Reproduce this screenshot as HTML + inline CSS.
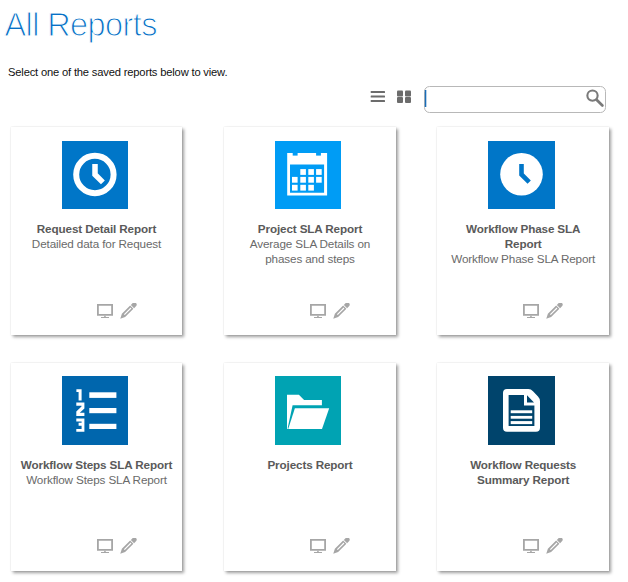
<!DOCTYPE html>
<html>
<head>
<meta charset="utf-8">
<style>
html,body{margin:0;padding:0;background:#fff;width:628px;height:582px;overflow:hidden;position:relative;font-family:"Liberation Sans",sans-serif;}
.abs{position:absolute;display:block;}
h1{position:absolute;left:4.5px;top:5.24px;margin:0;font-size:32.5px;line-height:40px;font-weight:400;color:#0870c6;white-space:nowrap;letter-spacing:-0.6px;-webkit-text-stroke:1.1px #fff;paint-order:fill stroke;}
.sub{position:absolute;left:8px;top:65.02px;font-size:11.2px;line-height:14px;color:#111;white-space:nowrap;letter-spacing:-0.18px;}
.card{position:absolute;background:#fff;box-shadow:2px 2px 3px rgba(0,0,0,0.38),0 0 1.5px rgba(0,0,0,0.12);}
.txt{position:absolute;width:200px;text-align:center;font-size:11.7px;line-height:15px;white-space:nowrap;letter-spacing:-0.13px;}
.t{font-weight:700;color:#5a5a5a;}
.d{color:#6a6a6a;}
</style>
</head>
<body>
<h1>All Reports</h1>
<div class="sub">Select one of the saved reports below to view.</div>
<svg class="abs" style="left:0;top:0" width="628" height="120">
<g fill="#6c6c6c">
<rect x="370.7" y="91" width="14.3" height="2" rx="0.5"/>
<rect x="370.7" y="95.5" width="14.3" height="2" rx="0.5"/>
<rect x="370.7" y="100" width="14.3" height="2" rx="0.5"/>
<rect x="397" y="90.5" width="6" height="6" rx="1"/>
<rect x="405" y="90.5" width="6" height="6" rx="1"/>
<rect x="397" y="97" width="6" height="6" rx="1"/>
<rect x="405" y="97" width="6" height="6" rx="1"/>
</g>
<rect x="424.5" y="86.5" width="181" height="26" rx="5" fill="#fff" stroke="#b8b8b8" stroke-width="1"/>
<rect x="424.8" y="90" width="1.5" height="17" fill="#1a6db8"/>
<circle cx="592.5" cy="95.6" r="5.15" fill="none" stroke="#7a7a7a" stroke-width="2.1"/>
<line x1="596.6" y1="99.7" x2="602.4" y2="105.5" stroke="#7a7a7a" stroke-width="2.7" stroke-linecap="round"/>
</svg>
<div class="card" style="left:11px;top:127px;width:171px;height:208px"></div>
<svg class="abs" style="left:62px;top:141px" width="66" height="68" viewBox="0 0 66 68"><rect width="66" height="68" fill="#0076c8"/><g transform="translate(0 0)"><circle cx="32.9" cy="33.5" r="18.7" fill="none" stroke="#fff" stroke-width="6"/>
<path d="M33 22.9 V33.5 L40.9 41.4" fill="none" stroke="#fff" stroke-width="5.5" stroke-linejoin="miter"/></g></svg>
<div class="txt" style="left:-3.5px;top:220.85px"><div class="t">Request Detail Report</div><div class="d">Detailed data for Request</div></div>
<svg class="abs" style="left:97px;top:303px" width="42" height="17" viewBox="0 0 42 17"><g fill="#a6a6a6">
<path fill-rule="evenodd" d="M0 1 H16 V12.7 H0 Z M1.8 2.7 V11 H14.2 V2.7 Z"/>
<rect x="7.2" y="12.7" width="1.5" height="1.4"/>
<rect x="4" y="14" width="8" height="1"/>
</g>
<g transform="translate(31.1 7.9) rotate(-45)" fill="#a6a6a6">
<path fill-rule="evenodd" d="M-11.1 0 L-6.5 -2.3 H5.2 V2.3 H-6.5 Z M-5.3 -0.6 V0.6 H4.1 V-0.6 Z"/>
<path d="M6.2 -2.3 H8.8 A2.3 2.3 0 0 1 8.8 2.3 H6.2 Z"/>
</g></svg>
<div class="card" style="left:224px;top:127px;width:172px;height:208px"></div>
<svg class="abs" style="left:275px;top:141px" width="66" height="68" viewBox="0 0 66 68"><rect width="66" height="68" fill="#009cf5"/><g transform="translate(0 0)"><path fill="#fff" fill-rule="evenodd" d="M12.2 11.9 H52.1 V54.5 H12.2 Z M15 23.6 V51.7 H49.1 V23.6 Z"/>
<rect x="17.7" y="11.9" width="4.9" height="2.7" fill="#009cf5"/>
<rect x="41.1" y="11.9" width="4.8" height="2.7" fill="#009cf5"/>
<g fill="#fff"><rect x="25.3" y="28.1" width="5.6" height="5.8"/><rect x="33.3" y="28.1" width="5.6" height="5.8"/><rect x="41.1" y="28.1" width="5.6" height="5.8"/><rect x="17" y="35.9" width="5.6" height="5.8"/><rect x="25.3" y="35.9" width="5.6" height="5.8"/><rect x="33.3" y="35.9" width="5.6" height="5.8"/><rect x="41.1" y="35.9" width="5.6" height="5.8"/><rect x="17" y="43.8" width="5.6" height="5.8"/><rect x="25.3" y="43.8" width="5.6" height="5.8"/><rect x="33.3" y="43.8" width="5.6" height="5.8"/></g></g></svg>
<div class="txt" style="left:210px;top:220.85px"><div class="t">Project SLA Report</div><div class="d">Average SLA Details on</div><div class="d">phases and steps</div></div>
<svg class="abs" style="left:310px;top:303px" width="42" height="17" viewBox="0 0 42 17"><g fill="#a6a6a6">
<path fill-rule="evenodd" d="M0 1 H16 V12.7 H0 Z M1.8 2.7 V11 H14.2 V2.7 Z"/>
<rect x="7.2" y="12.7" width="1.5" height="1.4"/>
<rect x="4" y="14" width="8" height="1"/>
</g>
<g transform="translate(31.1 7.9) rotate(-45)" fill="#a6a6a6">
<path fill-rule="evenodd" d="M-11.1 0 L-6.5 -2.3 H5.2 V2.3 H-6.5 Z M-5.3 -0.6 V0.6 H4.1 V-0.6 Z"/>
<path d="M6.2 -2.3 H8.8 A2.3 2.3 0 0 1 8.8 2.3 H6.2 Z"/>
</g></svg>
<div class="card" style="left:437px;top:127px;width:172px;height:208px"></div>
<svg class="abs" style="left:488px;top:141px" width="67" height="68" viewBox="0 0 67 68"><rect width="67" height="68" fill="#0076c8"/><g transform="translate(0 0)"><circle cx="33.5" cy="33.2" r="21.3" fill="#fff"/>
<path d="M33.5 23.1 V33.5 L41.2 41.2" fill="none" stroke="#0076c8" stroke-width="4.6" stroke-linejoin="miter"/></g></svg>
<div class="txt" style="left:423.20000000000005px;top:220.85px"><div class="t">Workflow Phase SLA</div><div class="t">Report</div><div class="d">Workflow Phase SLA Report</div></div>
<svg class="abs" style="left:523.2px;top:303px" width="42" height="17" viewBox="0 0 42 17"><g fill="#a6a6a6">
<path fill-rule="evenodd" d="M0 1 H16 V12.7 H0 Z M1.8 2.7 V11 H14.2 V2.7 Z"/>
<rect x="7.2" y="12.7" width="1.5" height="1.4"/>
<rect x="4" y="14" width="8" height="1"/>
</g>
<g transform="translate(31.1 7.9) rotate(-45)" fill="#a6a6a6">
<path fill-rule="evenodd" d="M-11.1 0 L-6.5 -2.3 H5.2 V2.3 H-6.5 Z M-5.3 -0.6 V0.6 H4.1 V-0.6 Z"/>
<path d="M6.2 -2.3 H8.8 A2.3 2.3 0 0 1 8.8 2.3 H6.2 Z"/>
</g></svg>
<div class="card" style="left:11px;top:363px;width:171px;height:208px"></div>
<svg class="abs" style="left:62px;top:376px" width="66" height="69" viewBox="0 0 66 69"><rect width="66" height="69" fill="#0066ad"/><g transform="translate(0 1)"><g fill="#fff">
<rect x="27.3" y="15.3" width="27.1" height="5.6"/>
<rect x="27.3" y="31" width="27.1" height="5.2"/>
<rect x="27.3" y="46.8" width="27.1" height="5.2"/>
<path d="M14.4 12.3 H19.6 V23.5 H16.6 V14.9 H14.4 Z"/>
<path d="M14.3 25.6 H22.4 V31.4 L17.8 35.8 H22.4 V39 H14.3 V34.6 L19.5 29.6 V28.7 H14.3 Z"/>
<path d="M14.3 41.4 H22.4 V54.7 H14.3 V51.9 H19.6 V48.8 H16.6 V45.7 H19.6 V44.5 H14.3 Z"/>
</g></g></svg>
<div class="txt" style="left:-3.5px;top:456.85px"><div class="t">Workflow Steps SLA Report</div><div class="d">Workflow Steps SLA Report</div></div>
<svg class="abs" style="left:97px;top:538px" width="42" height="17" viewBox="0 0 42 17"><g fill="#a6a6a6">
<path fill-rule="evenodd" d="M0 1 H16 V12.7 H0 Z M1.8 2.7 V11 H14.2 V2.7 Z"/>
<rect x="7.2" y="12.7" width="1.5" height="1.4"/>
<rect x="4" y="14" width="8" height="1"/>
</g>
<g transform="translate(31.1 7.9) rotate(-45)" fill="#a6a6a6">
<path fill-rule="evenodd" d="M-11.1 0 L-6.5 -2.3 H5.2 V2.3 H-6.5 Z M-5.3 -0.6 V0.6 H4.1 V-0.6 Z"/>
<path d="M6.2 -2.3 H8.8 A2.3 2.3 0 0 1 8.8 2.3 H6.2 Z"/>
</g></svg>
<div class="card" style="left:224px;top:363px;width:172px;height:208px"></div>
<svg class="abs" style="left:275px;top:376px" width="66" height="69" viewBox="0 0 66 69"><rect width="66" height="69" fill="#00a3b3"/><g transform="translate(0 1)"><path fill="#fff" d="M12 17.8 H23.9 L29.1 23 H46.9 V28.3 H17.6 L12.8 50.4 V52 H12 Z"/>
<path fill="#fff" d="M19.9 31.2 H54.2 L47 52 H13.2 Z"/></g></svg>
<div class="txt" style="left:210px;top:456.85px"><div class="t">Projects Report</div></div>
<svg class="abs" style="left:310px;top:538px" width="42" height="17" viewBox="0 0 42 17"><g fill="#a6a6a6">
<path fill-rule="evenodd" d="M0 1 H16 V12.7 H0 Z M1.8 2.7 V11 H14.2 V2.7 Z"/>
<rect x="7.2" y="12.7" width="1.5" height="1.4"/>
<rect x="4" y="14" width="8" height="1"/>
</g>
<g transform="translate(31.1 7.9) rotate(-45)" fill="#a6a6a6">
<path fill-rule="evenodd" d="M-11.1 0 L-6.5 -2.3 H5.2 V2.3 H-6.5 Z M-5.3 -0.6 V0.6 H4.1 V-0.6 Z"/>
<path d="M6.2 -2.3 H8.8 A2.3 2.3 0 0 1 8.8 2.3 H6.2 Z"/>
</g></svg>
<div class="card" style="left:437px;top:363px;width:172px;height:208px"></div>
<svg class="abs" style="left:488px;top:376px" width="67" height="69" viewBox="0 0 67 69"><rect width="67" height="69" fill="#00446c"/><g transform="translate(0 1)"><path fill="#fff" d="M19 12.1 H40.4 Q43 12.1 45 14.2 L50 19.5 Q52 21.6 52 24.3 V50.8 Q52 54.8 48 54.8 H19 Q15 54.8 15 50.8 V16.1 Q15 12.1 19 12.1 Z"/>
<path fill="#00446c" d="M20.6 17.9 H36 V28.6 H46.4 V49 H20.6 Z"/>
<path fill="#00446c" d="M39 18.3 L46 25.6 H39 Z"/>
<g fill="#fff">
<rect x="22.7" y="33.3" width="21.5" height="2.9"/>
<rect x="22.7" y="38.9" width="21.5" height="2.8"/>
<rect x="22.7" y="44.1" width="21.5" height="3"/>
</g></g></svg>
<div class="txt" style="left:423.20000000000005px;top:456.85px"><div class="t">Workflow Requests</div><div class="t">Summary Report</div></div>
<svg class="abs" style="left:523.2px;top:538px" width="42" height="17" viewBox="0 0 42 17"><g fill="#a6a6a6">
<path fill-rule="evenodd" d="M0 1 H16 V12.7 H0 Z M1.8 2.7 V11 H14.2 V2.7 Z"/>
<rect x="7.2" y="12.7" width="1.5" height="1.4"/>
<rect x="4" y="14" width="8" height="1"/>
</g>
<g transform="translate(31.1 7.9) rotate(-45)" fill="#a6a6a6">
<path fill-rule="evenodd" d="M-11.1 0 L-6.5 -2.3 H5.2 V2.3 H-6.5 Z M-5.3 -0.6 V0.6 H4.1 V-0.6 Z"/>
<path d="M6.2 -2.3 H8.8 A2.3 2.3 0 0 1 8.8 2.3 H6.2 Z"/>
</g></svg>
</body>
</html>
